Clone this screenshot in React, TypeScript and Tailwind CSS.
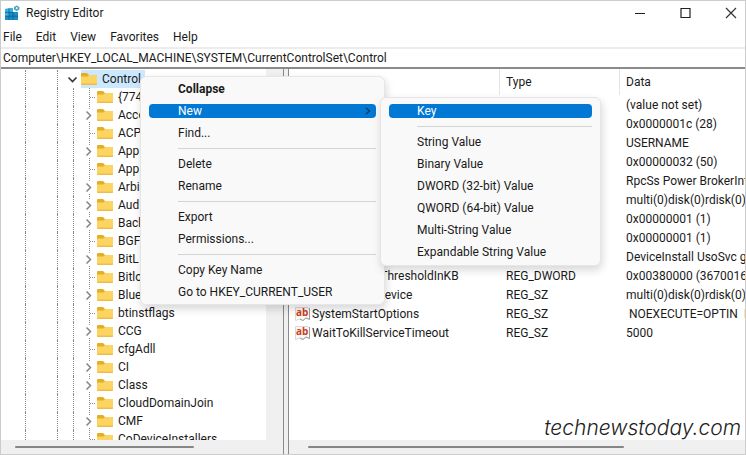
import React from "react";

type KeyNode = { name: string; expandable: boolean };
type ValueRow = { name: string; type: string; data: string };
type MenuEntry = { label: string; bold?: boolean; active?: boolean; submenu?: boolean } | null;

const keys: KeyNode[] = [
  { name: "{774", expandable: false },
  { name: "Acce", expandable: true },
  { name: "ACP", expandable: false },
  { name: "App", expandable: true },
  { name: "App", expandable: false },
  { name: "Arbi", expandable: true },
  { name: "Aud", expandable: true },
  { name: "Back", expandable: true },
  { name: "BGF", expandable: false },
  { name: "BitL", expandable: true },
  { name: "Bitlo", expandable: false },
  { name: "Blue", expandable: true },
  { name: "btinstflags", expandable: false },
  { name: "CCG", expandable: true },
  { name: "cfgAdll", expandable: false },
  { name: "CI", expandable: true },
  { name: "Class", expandable: true },
  { name: "CloudDomainJoin", expandable: false },
  { name: "CMF", expandable: true },
  { name: "CoDeviceInstallers", expandable: false },
];

const values: ValueRow[] = [
  { name: "", type: "", data: "(value not set)" },
  { name: "", type: "", data: "0x0000001c (28)" },
  { name: "", type: "", data: "USERNAME" },
  { name: "", type: "", data: "0x00000032 (50)" },
  { name: "", type: "", data: "RpcSs Power BrokerInfrastructure" },
  { name: "", type: "", data: "multi(0)disk(0)rdisk(0)partition(1)" },
  { name: "", type: "", data: "0x00000001 (1)" },
  { name: "", type: "", data: "0x00000001 (1)" },
  { name: "", type: "", data: "DeviceInstall UsoSvc gpsvc" },
  { name: "SvcHostSplitThresholdInKB", type: "REG_DWORD", data: "0x00380000 (3670016)" },
  { name: "SystemBootDevice", type: "REG_SZ", data: "multi(0)disk(0)rdisk(0)partition(1)" },
  { name: "SystemStartOptions", type: "REG_SZ", data: "\u00a0NOEXECUTE=OPTIN \u00a0HYPERVISOR" },
  { name: "WaitToKillServiceTimeout", type: "REG_SZ", data: "5000" },
];

const contextMenu: MenuEntry[] = [
  { label: "Collapse", bold: true },
  { label: "New", active: true, submenu: true },
  { label: "Find..." },
  null,
  { label: "Delete" },
  { label: "Rename" },
  null,
  { label: "Export" },
  { label: "Permissions..." },
  null,
  { label: "Copy Key Name" },
  { label: "Go to HKEY_CURRENT_USER" },
];

const newMenu: MenuEntry[] = [
  { label: "Key", active: true },
  null,
  { label: "String Value" },
  { label: "Binary Value" },
  { label: "DWORD (32-bit) Value" },
  { label: "QWORD (64-bit) Value" },
  { label: "Multi-String Value" },
  { label: "Expandable String Value" },
];

function AppIcon() {
  return (
    <svg width="16" height="16" viewBox="0 0 16 16" aria-hidden="true">
      <path d="M1 4 L9 3 V7 H14 V15 L1 15 Z" fill="#1b8fc4" />
      <path d="M1 4 L9 3 V7 H5 V11 H1 Z" fill="#35b4e4" />
      <path d="M5 3.5 V15 M9 7 V15 M1 7.4 H9 M1 11.2 H14" stroke="#0b5f8d" strokeWidth="0.8" fill="none" />
      <path d="M12.6 0.4 L15.4 2 V4.6 L12.6 6 L10 4.6 V2 Z" fill="#4a9fc0" />
      <circle cx="12.7" cy="3.2" r="1.1" fill="#d9f2fb" />
    </svg>
  );
}

function Folder() {
  return (
    <svg width="16" height="14" viewBox="0 0 16 14" className="shrink-0" aria-hidden="true">
      <path d="M0 2 Q0 1 1 1 H6 L8 3 H15 Q16 3 16 4 V7 H0 Z" fill="#e3ae22" />
      <path d="M0 4.6 H6.4 L8 3 H15 Q16 3 16 4 V12 Q16 13 15 13 H1 Q0 13 0 12 Z" fill="#fcd462" />
      <path d="M0 11.6 H16 V12 Q16 13 15 13 H1 Q0 13 0 12 Z" fill="#efbd47" />
    </svg>
  );
}

function Branch({ expandable }: { expandable: boolean }) {
  return (
    <svg width="16" height="18" viewBox="0 0 16 18" className="shrink-0" fill="none" aria-hidden="true">
      {expandable ? (
        <>
          <path d="M8.5 0 V3 M8.5 16 V18" stroke="#8a8a8a" strokeDasharray="1 1" />
          <path d="M5.5 5.5 L9.5 9.5 L5.5 13.5" stroke="#858585" strokeWidth="1.5" />
        </>
      ) : (
        <>
          <path d="M8.5 0 V18" stroke="#8a8a8a" strokeDasharray="1 1" />
          <path d="M9 9.5 H15" stroke="#8a8a8a" strokeDasharray="1 1" />
        </>
      )}
    </svg>
  );
}

function StringIcon() {
  return (
    <svg width="16" height="16" viewBox="0 0 16 16" className="shrink-0" aria-hidden="true">
      <path d="M1.5 1.5 H14 L15.5 3 V13.5 L12 12 L9 14.5 L6 13 L1.5 14.5 Z" fill="#fbf8f6" stroke="#dcd8d5" />
      <path d="M15.5 2 V13.5 L12 12 L9 14.5 L6 13" fill="none" stroke="#9b9b9b" />
      <text x="2" y="10" fontSize="10" fontWeight="700" fill="#c8401c" fontFamily="Open Sans, sans-serif">
        ab
      </text>
    </svg>
  );
}

const guide = "shrink-0 border-l border-dotted border-[#888888]";

function Tree() {
  return (
    <nav aria-label="Registry keys" className="flex w-[282px] shrink-0 flex-col overflow-hidden">
      <div className="flex min-h-0 flex-1">
        <ul className="min-w-0 flex-1 overflow-hidden pl-6">
          <li className="flex h-[19px] items-center pt-px">
            <span className={`${guide} h-full w-8`} />
            <span className={`${guide} h-full w-2`} />
            <svg width="16" height="18" viewBox="0 0 16 18" className="shrink-0" fill="none" aria-hidden="true">
              <path d="M3.5 7.5 L7.5 11.5 L11.5 7.5" stroke="#333333" strokeWidth="1.6" />
            </svg>
            <span className="flex h-[18px] w-16 items-center gap-1 bg-[#cce8ff]">
              <Folder />
              <span className="px-px">Control</span>
            </span>
          </li>
          {keys.map((k, i) => (
            <li key={i} className="flex h-[18px] items-center whitespace-nowrap">
              <span className={`${guide} h-full w-8`} />
              <span className={`${guide} h-full w-4`} />
              <span className={`${guide} h-full w-2`} />
              <Branch expandable={k.expandable} />
              <span className="flex items-center gap-1">
                <Folder />
                <span className="px-px">{k.name}</span>
              </span>
            </li>
          ))}
        </ul>
        <div className="w-[17px] shrink-0 bg-[#f0f0f0]" />
      </div>
      <div className="flex h-3.5 shrink-0 items-center bg-[#f0f0f0] px-3.5">
        <div className="h-0.5 w-[179px] rounded-full bg-[#868686]" />
      </div>
    </nav>
  );
}

function ValueList() {
  return (
    <section aria-label="Values" className="flex min-w-0 flex-1 flex-col">
      <div className="min-h-0 flex-1 overflow-hidden">
        <table className="w-full table-fixed border-separate border-spacing-0 whitespace-nowrap text-left">
          <thead>
            <tr className="h-[26px]">
              <th className="w-[211px] border-r border-[#e5e5e5] p-0 font-normal" />
              <th className="w-[120px] border-r border-[#e5e5e5] p-0 pl-1.5 font-normal">Type</th>
              <th className="p-0 pl-1.5 font-normal">Data</th>
            </tr>
          </thead>
          <tbody>
            {values.map((v, i) => (
              <tr key={i} className="h-[19px]">
                <td className="p-0 pl-[5px]">
                  <span className="flex h-[19px] items-center gap-0.5">
                    {v.name && <StringIcon />}
                    {v.name}
                  </span>
                </td>
                <td className="p-0 pl-1.5">{v.type}</td>
                <td className="overflow-hidden p-0 pl-1.5">{v.data}</td>
              </tr>
            ))}
          </tbody>
        </table>
      </div>
      <div className="flex h-3.5 shrink-0 items-center bg-[#f0f0f0] pl-[19px]">
        <div className="h-0.5 w-[316px] rounded-full bg-[#868686]" />
      </div>
    </section>
  );
}

function Menu({ entries, label, inset, className }: { entries: MenuEntry[]; label: string; inset: string; className: string }) {
  return (
    <div
      role="menu"
      aria-label={label}
      className={`absolute rounded-md border border-[#e6e6e6] bg-[#f9f9f9] px-2 shadow-[1px_4px_8px_rgba(0,0,0,0.16)] ${className}`}
    >
      {entries.map((e, i) =>
        e === null ? (
          <div key={i} role="separator" className={`flex h-[9px] items-center ${inset}`}>
            <div className="h-px w-full bg-[#d4d4d4]" />
          </div>
        ) : (
          <div key={i} className="flex h-[22px] items-center">
            <button
              type="button"
              role="menuitem"
              className={`flex h-3.5 w-full items-center justify-between whitespace-nowrap rounded pr-1 text-left ${inset} ${
                e.active ? "bg-[#0078d4] text-white" : ""
              } ${e.bold ? "font-bold" : ""}`}
            >
              {e.label}
              {e.submenu && (
                <svg width="8" height="8" viewBox="0 0 8 8" fill="none" aria-hidden="true">
                  <path d="M2 1 L5.5 4 L2 7" stroke="#123c66" strokeWidth="1.3" />
                </svg>
              )}
            </button>
          </div>
        ),
      )}
    </div>
  );
}

export default function App() {
  return (
    <div className="relative flex h-screen flex-col overflow-hidden border border-[#cccccc] bg-white font-[Roboto,sans-serif] text-[12px] leading-4 text-[#1a1a1a]">
      <header className="flex h-[23px] shrink-0 items-center gap-1.5 pl-[3px] pr-2">
        <AppIcon />
        <h1 className="flex-1">Registry Editor</h1>
        <div className="flex items-center gap-[34px]">
          <button type="button" aria-label="Minimize">
            <svg width="12" height="12" viewBox="0 0 12 12" aria-hidden="true">
              <path d="M1 6.5 H11" stroke="#222222" />
            </svg>
          </button>
          <button type="button" aria-label="Maximize">
            <svg width="11" height="12" viewBox="0 0 11 12" fill="none" aria-hidden="true">
              <path d="M1 1.5 H10 V10.5 H1 Z" stroke="#222222" strokeWidth="1.2" />
            </svg>
          </button>
          <button type="button" aria-label="Close">
            <svg width="12" height="12" viewBox="0 0 12 12" aria-hidden="true">
              <path d="M1 1 L11 11 M11 1 L1 11" stroke="#333333" strokeWidth="1.2" />
            </svg>
          </button>
        </div>
      </header>
      <div className="flex h-[23px] shrink-0 items-center gap-3.5 px-0.5 pt-0.5">
        <button type="button">File</button>
        <button type="button">Edit</button>
        <button type="button">View</button>
        <button type="button">Favorites</button>
        <button type="button">Help</button>
      </div>
      <input
        aria-label="Address"
        className="h-[22px] shrink-0 border-b-2 border-t-2 border-b-[#8a8a8a] border-t-[#ececec] px-0.5 outline-none"
        defaultValue="Computer\HKEY_LOCAL_MACHINE\SYSTEM\CurrentControlSet\Control"
      />
      <main className="flex min-h-0 flex-1">
        <Tree />
        <div className="w-1.5 shrink-0 border-x border-[#8a8a8a] bg-[#f0f0f0]" />
        <ValueList />
      </main>
      <Menu entries={contextMenu} label="Key actions" inset="pl-[29px]" className="left-[139px] top-[75px] w-[245px] py-px" />
      <Menu entries={newMenu} label="New" inset="pl-7" className="left-[379px] top-[96px] w-[221px] py-0.5" />
      <p className="absolute bottom-3 right-1 font-[Inter] text-[21px] font-light italic leading-7 text-[#222222]">technewstoday.com</p>
    </div>
  );
}
